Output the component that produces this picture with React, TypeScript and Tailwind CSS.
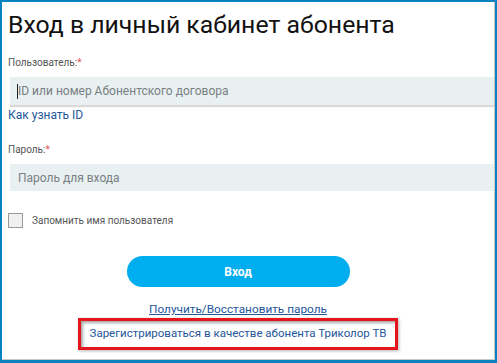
import React from "react";

// Форма входа в личный кабинет абонента
export default function App() {
  return (
    <div className="w-[497px] h-[363px] overflow-hidden bg-white font-['Roboto',sans-serif]">
      <div className="relative h-full border-t-2 border-l-2 border-r-2 border-b-[3px] border-[#0a82c0]">
        <div className="h-full border-b border-r border-[#c8c8c8] pl-[6px] pt-[7px]">
          <h1 className="text-[24.8px] leading-[32px] text-[#111]">Вход в личный кабинет абонента</h1>

          <label className="block mt-[16px] text-[10px] leading-[12px] text-[#555]">
            Пользователь:<span className="text-[#e2525c]">*</span>
          </label>
          <div className="mt-[8px] ml-[2px] h-[28px] bg-[#e8f0f2] shadow-[0_2px_1px_rgba(0,0,0,0.15)] flex items-center pl-[7px]">
            <span className="w-px h-[15px] bg-[#222]" />
            <span className="text-[12px] text-[#7a7f82]">ID или номер Абонентского договора</span>
          </div>
          <a className="block mt-[3px] text-[12px] leading-[14px] text-[#24569a]">Как узнать ID</a>

          <label className="block mt-[22px] text-[10px] leading-[12px] text-[#555]">
            Пароль:<span className="text-[#e2525c]">*</span>
          </label>
          <div className="mt-[8px] ml-[2px] h-[27px] bg-[#e8f0f2] flex items-center pl-[8px]">
            <span className="text-[12px] text-[#7a7f82]">Пароль для входа</span>
          </div>

          <label className="flex items-center gap-[9px] mt-[22px]">
            <span className="w-[15px] h-[15px] border border-[#999] bg-[#f0f0f0]" />
            <span className="text-[10px] text-[#555]">Запомнить имя пользователя</span>
          </label>

          <div className="flex flex-col items-center mt-[28px] pr-[26px]">
            <button className="w-[223px] h-[31px] rounded-full bg-[#00adee] text-white text-[12px] font-bold">Вход</button>
            <a className="mt-[15px] text-[11.8px] leading-[14px] text-[#24569a] underline whitespace-nowrap">Получить/Восстановить пароль</a>
          </div>
        </div>

        <div className="absolute left-[76px] top-[316px] w-[320px] h-[32px] border-[3px] border-[#e8141b] bg-white shadow-[inset_2px_2px_3px_rgba(0,0,0,0.35),1px_1px_3px_rgba(0,0,0,0.3)] flex items-center justify-center">
          <span className="text-[11.5px] text-[#24569a] whitespace-nowrap">Зарегистрироваться в качестве абонента Триколор ТВ</span>
        </div>
      </div>
    </div>
  );
}
